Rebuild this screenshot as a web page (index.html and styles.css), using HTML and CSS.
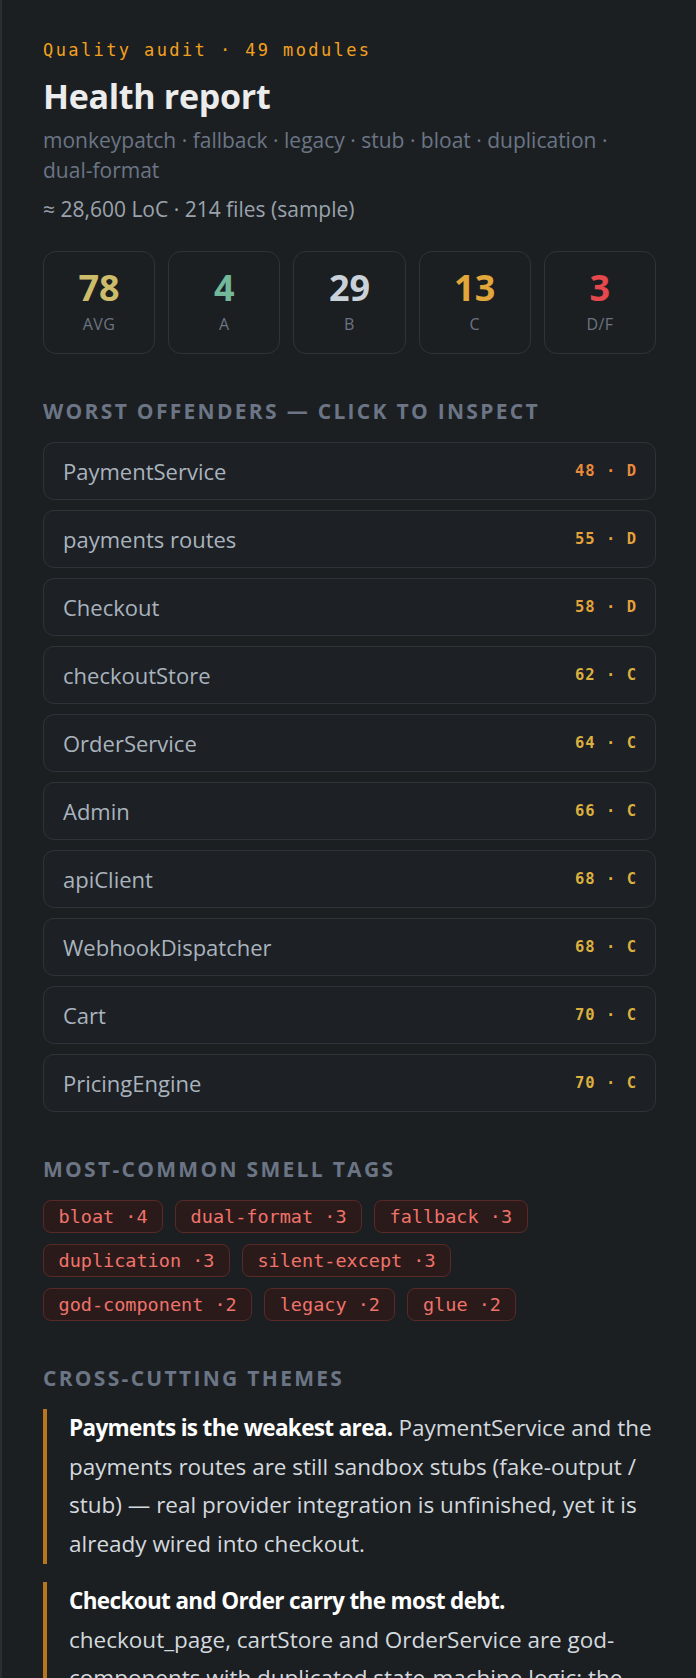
FILE: index.html
```html
<!DOCTYPE html>
<html lang="en">
<head>
<meta charset="utf-8">
<title>Health report</title>
<link rel="stylesheet" href="styles.css">
</head>
<body>
<main class="page">
  <header class="head">
    <div class="eyebrow">Quality audit · 49 modules</div>
    <h1 class="title">Health report</h1>
    <p class="tags-line">monkeypatch · fallback · legacy · stub · bloat · duplication · dual-format</p>
    <p class="loc">≈ 28,600 LoC · 214 files (sample)</p>
  </header>

  <section class="stats">
    <div class="stat"><div class="num avg">78</div><div class="lbl">AVG</div></div>
    <div class="stat"><div class="num ga">4</div><div class="lbl">A</div></div>
    <div class="stat"><div class="num gb">29</div><div class="lbl">B</div></div>
    <div class="stat"><div class="num gc">13</div><div class="lbl">C</div></div>
    <div class="stat"><div class="num gd">3</div><div class="lbl">D/F</div></div>
  </section>

  <section class="section">
    <h2 class="sec-title">Worst offenders — click to inspect</h2>
    <ul class="rows">
      <li class="row"><span class="name">PaymentService</span><span class="score s48">48 · D</span></li>
      <li class="row"><span class="name">payments routes</span><span class="score s55">55 · D</span></li>
      <li class="row"><span class="name">Checkout</span><span class="score s55">58 · D</span></li>
      <li class="row"><span class="name">checkoutStore</span><span class="score sc">62 · C</span></li>
      <li class="row"><span class="name">OrderService</span><span class="score sc">64 · C</span></li>
      <li class="row"><span class="name">Admin</span><span class="score sc">66 · C</span></li>
      <li class="row"><span class="name">apiClient</span><span class="score sc">68 · C</span></li>
      <li class="row"><span class="name">WebhookDispatcher</span><span class="score sc">68 · C</span></li>
      <li class="row"><span class="name">Cart</span><span class="score sc">70 · C</span></li>
      <li class="row"><span class="name">PricingEngine</span><span class="score sc">70 · C</span></li>
    </ul>
  </section>

  <section class="section">
    <h2 class="sec-title">Most-common smell tags</h2>
    <div class="chips">
      <span class="chip">bloat ·4</span>
      <span class="chip">dual-format ·3</span>
      <span class="chip">fallback ·3</span>
      <span class="chip">duplication ·3</span>
      <span class="chip">silent-except ·3</span>
      <span class="chip">god-component ·2</span>
      <span class="chip">legacy ·2</span>
      <span class="chip">glue ·2</span>
    </div>
  </section>

  <section class="section">
    <h2 class="sec-title">Cross-cutting themes</h2>
    <div class="themes">
      <p class="theme"><strong>Payments is the weakest area.</strong> PaymentService and the payments routes are still sandbox stubs (fake-output / stub) — real provider integration is unfinished, yet it is already wired into checkout.</p>
      <p class="theme"><strong>Checkout and Order carry the most debt.</strong> checkout_page, cartStore and OrderService are god-components with duplicated state-machine logic; the same order transitions are re-implemented in three places.</p>
      <p class="theme"><strong>Fallbacks hide failures.</strong> Silent excepts and dual-format parsing paths swallow errors instead of surfacing them.</p>
    </div>
  </section>
</main>
</body>
</html>
```

FILE: styles.css
```css
* { box-sizing: border-box; }
html, body { margin: 0; padding: 0; }
body {
  background: #1c1f22;
  color: #c9d1d9;
  font-family: "Open Sans", "Noto Sans", sans-serif;
}
.page {
  border-left: 2px solid #2a2e32;
  padding: 38px 40px 40px 41px;
  min-height: 1678px;
}
.eyebrow {
  font-family: "DejaVu Sans Mono", monospace;
  font-size: 17px;
  line-height: 24px;
  letter-spacing: 2.4px;
  color: #f2a11e;
}
.title {
  margin: 13px 0 0;
  font-size: 34px;
  line-height: 42px;
  font-weight: 700;
  color: #ececec;
  letter-spacing: -0.3px;
}
.tags-line {
  margin: 8px 0 0;
  font-size: 21px;
  line-height: 30px;
  color: #6b7585;
}
.loc {
  margin: 10px 0 0;
  font-size: 21px;
  line-height: 28px;
  color: #9aa3ad;
}
.stats {
  margin-top: 28px;
  display: grid;
  grid-template-columns: repeat(5, 1fr);
  gap: 13px;
}
.stat {
  border: 1px solid #2f3337;
  border-radius: 13px;
  padding: 15px 4px 18px;
  text-align: center;
}
.num {
  font-size: 36px;
  line-height: 42px;
  font-weight: 700;
}
.avg { color: #cdbd6a; }
.ga { color: #72b99b; }
.gb { color: #c9d1d9; }
.gc { color: #e2a73a; }
.gd { color: #e5484d; }
.lbl {
  margin-top: 4px;
  font-size: 16px;
  line-height: 22px;
  letter-spacing: 0.4px;
  color: #6b7480;
}
.section { margin-top: 43px; }
.sec-title {
  margin: 0 0 17px;
  font-size: 21px;
  line-height: 28px;
  font-weight: 700;
  letter-spacing: 2.3px;
  text-transform: uppercase;
  color: #6b7585;
}
.rows {
  list-style: none;
  margin: 0;
  padding: 0;
  display: flex;
  flex-direction: column;
  gap: 10px;
}
.row {
  display: flex;
  align-items: center;
  justify-content: space-between;
  border: 1px solid #2f3337;
  border-radius: 11px;
  padding: 14px 18px 14px 19px;
  background: #1d2024;
}
.name {
  font-size: 22px;
  line-height: 28px;
  color: #a9b3bd;
}
.score {
  font-family: "DejaVu Sans Mono", monospace;
  font-size: 15.5px;
  font-weight: 700;
  letter-spacing: 1px;
}
.s48 { color: #ea8a3c; }
.s55 { color: #e4a23a; }
.sc { color: #dcb03f; }
.chips {
  display: flex;
  flex-wrap: wrap;
  gap: 11px 12px;
}
.chip {
  font-family: "DejaVu Sans Mono", monospace;
  font-size: 18.5px;
  line-height: 21px;
  padding: 5px 14.5px;
  border: 1px solid #582a27;
  border-radius: 8px;
  background: #2b1a1a;
  color: #f0736a;
}
.themes {
  display: flex;
  flex-direction: column;
  gap: 18px;
}
.theme {
  margin: 0;
  border-left: 4px solid #b8761c;
  padding-left: 22px;
  font-size: 22.5px;
  line-height: 38.7px;
  color: #d3d9de;
}
.theme strong {
  color: #ffffff;
  font-weight: 700;
  letter-spacing: -0.65px;
}
```
